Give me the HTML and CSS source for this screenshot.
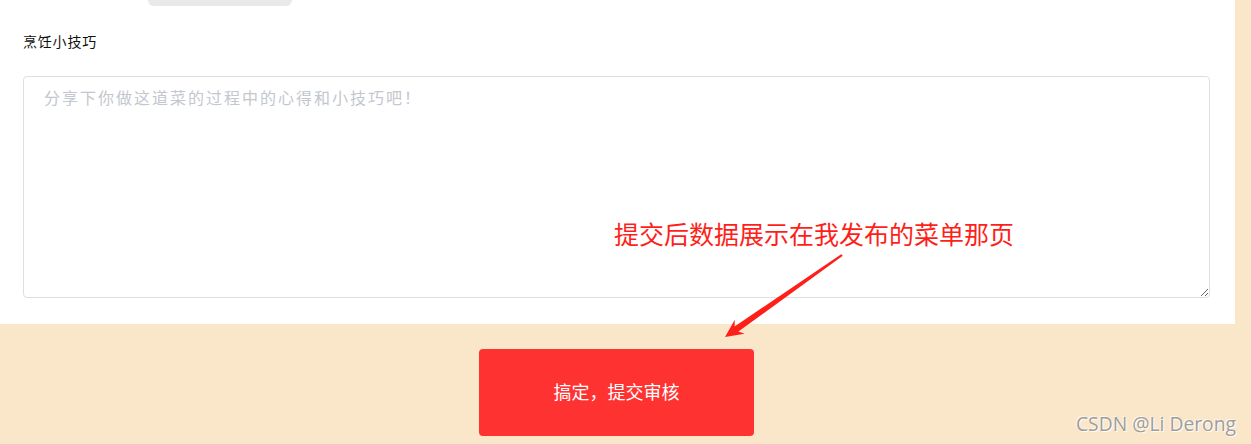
FILE: index.html
```html
<!DOCTYPE html>
<html lang="zh-CN">
<head>
<meta charset="utf-8">
<title>烹饪小技巧</title>
<link rel="stylesheet" href="styles.css">
</head>
<body>
<div class="page">
  <section class="panel">
    <div class="prev-btn"></div>
    <div class="label">烹饪小技巧</div>
    <textarea class="tips" placeholder="分享下你做这道菜的过程中的心得和小技巧吧！"></textarea>
  </section>
  <div class="actions">
    <button class="submit" type="button">搞定，提交审核</button>
  </div>
</div>

<div class="note">提交后数据展示在我发布的菜单那页</div>
<svg class="arrow" width="1251" height="444" viewBox="0 0 1251 444" xmlns="http://www.w3.org/2000/svg">
  <polygon points="842.8,255.8 738.4,331.5 744.6,333.7 725,337 734.8,319.7 734.6,326.5 841.2,254.2" fill="#fe1f1a"/>
</svg>
<div class="watermark">CSDN @Li Derong</div>
</body>
</html>
```

FILE: styles.css
```css
html, body {
  margin: 0;
  padding: 0;
}

body {
  width: 1251px;
  height: 444px;
  overflow: hidden;
  position: relative;
  background: #fae7c9;
  font-family: "Noto Sans CJK SC", "Noto Sans", sans-serif;
  color: #000;
}

.page {
  width: 1235px;
}

.panel {
  background: #fff;
  padding: 0 25px 26px 23px;
}

.prev-btn {
  margin-left: 125px;
  width: 144px;
  height: 6px;
  background: #e9e9e9;
  border-radius: 0 0 6px 6px;
}

.label {
  margin-top: 25px;
  font-size: 14px;
  line-height: 21px;
  letter-spacing: 0.8px;
  color: #111;
}

.tips {
  display: block;
  box-sizing: border-box;
  margin-top: 24px;
  width: 100%;
  height: 222px;
  border: 1px solid #dcdfe6;
  border-radius: 4px;
  padding: 8px 20px;
  font-family: "Noto Sans CJK SC", "Noto Sans", sans-serif;
  font-size: 16px;
  line-height: 24px;
  letter-spacing: 2px;
  color: #333;
  background: #fff;
  resize: vertical;
  outline: none;
}

.tips::placeholder {
  color: #c3c7ce;
}

.actions {
  display: flex;
  justify-content: center;
  padding: 25px 2px 0 0;
}

.submit {
  width: 275px;
  height: 87px;
  border: none;
  border-radius: 4px;
  background: #ff3232;
  color: #fff;
  font-family: "Noto Sans CJK SC", "Noto Sans", sans-serif;
  font-size: 18px;
  padding: 0 0 4px 0;
}

.note {
  position: absolute;
  left: 614px;
  top: 219px;
  font-size: 25px;
  line-height: 28px;
  color: #fe1f1a;
  white-space: nowrap;
}

.arrow {
  position: absolute;
  left: 0;
  top: 0;
  pointer-events: none;
}

.watermark {
  position: absolute;
  right: 15px;
  bottom: 8px;
  font-family: "Open Sans", "Noto Sans", sans-serif;
  font-size: 19.3px;
  line-height: 24px;
  color: #a09d98;
  text-shadow: 1px 1px 1px #ffffff, -1px -1px 0 rgba(255,255,255,0.6);
  white-space: nowrap;
}
```
